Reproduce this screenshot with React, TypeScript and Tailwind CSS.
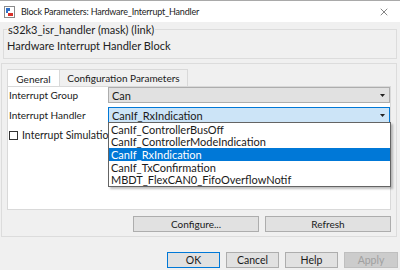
import { X } from "lucide-react";

const handlers = [
  "CanIf_ControllerBusOff",
  "CanIf_ControllerModeIndication",
  "CanIf_RxIndication",
  "CanIf_TxConfirmation",
  "MBDT_FlexCAN0_FifoOverflowNotif",
];

function Arrow() {
  return (
    <svg width="5" height="3" viewBox="0 0 5 3" className="shrink-0">
      <path d="M0 0h5L2.5 3z" fill="#222" />
    </svg>
  );
}

function BlockIcon() {
  return (
    <svg width="11" height="12" viewBox="0 0 11 12">
      <rect x="0.5" y="0.5" width="10" height="11" fill="#fff" stroke="#8a8a8a" />
      <path d="M2 2h4v3H4v2H2z" fill="#2f6fc6" />
      <rect x="4" y="7" width="5" height="3" fill="#d9302a" />
    </svg>
  );
}

export default function App() {
  return (
    <div className="w-[400px] h-[270px] overflow-hidden bg-[#f0f0f0] text-[11px] text-[#1a1a1a] font-['Lato',sans-serif] leading-none">
      {/* title bar */}
      <div className="h-[22px] bg-white border-t border-[#a9a9a9] flex items-center pl-[4px] pr-[10px]">
        <BlockIcon />
        <span className="ml-[6px] text-[9px] tracking-[-0.2px] text-[#222]">
          Block Parameters: Hardware_Interrupt_Handler
        </span>
        <X className="ml-auto h-[12px] w-[12px] text-[#333]" strokeWidth={1.2} />
      </div>

      <div className="px-[3px]">
        <fieldset className="mt-[2px] border border-[#dcdcdc] px-[3px] pb-[5px] h-[35px]">
          <legend className="px-[1px] text-[#222]">s32k3_isr_handler (mask) (link)</legend>
          <div className="mt-[5px] text-[#222]">Hardware Interrupt Handler Block</div>
        </fieldset>
      </div>

      <div className="mt-[4px] mx-[1px] mr-[3px] h-[174px] border border-[#dcdcdc] px-[5px] pt-[4px]">
        {/* tabs */}
        <div className="flex h-[18px] items-end text-[10px]">
          <div className="h-[18px] w-[53px] bg-white border border-b-0 border-[#d9d9d9] flex items-center justify-center relative top-[1px]">
            General
          </div>
          <div className="h-[17px] w-[128px] bg-[#f0f0f0] border border-b-0 border-l-0 border-[#d9d9d9] flex items-center justify-center">
            Configuration Parameters
          </div>
        </div>
        <div className="relative h-[124px] bg-white border border-[#d9d9d9] pl-[1px]">
          <div className="flex items-center h-[16px]">
            <span className="w-[99px] text-[10px]">Interrupt Group</span>
            <div className="flex-1 h-[16px] bg-[#e1e1e1] border border-[#adadad] flex items-center justify-between pl-[3px] pr-[4px]">
              <span>Can</span>
              <Arrow />
            </div>
          </div>
          <div className="flex items-center h-[16px] mt-[4px]">
            <span className="w-[99px] text-[10px]">Interrupt Handler</span>
            <div className="flex-1 h-[16px] bg-[#cce4f7] border border-[#0078d7] flex items-center justify-between pl-[3px] pr-[4px]">
              <span>CanIf_RxIndication</span>
              <Arrow />
            </div>
          </div>
          <div className="flex items-center h-[16px] mt-[4px] text-[10.5px]">
            <span className="w-[9px] h-[9px] border border-[#333] bg-white mr-[4px]" />
            <span>Interrupt Simulation</span>
          </div>

          {/* open list */}
          <div className="absolute left-[100px] top-[35px] w-[283px] bg-white border border-[#646464] shadow-[2px_2px_2px_rgba(0,0,0,0.25)]">
            {handlers.map((h) => (
              <div
                key={h}
                className={
                  h === "CanIf_RxIndication"
                    ? "h-[12.6px] flex items-center pl-[2px] bg-[#0078d7] text-white"
                    : "h-[12.6px] flex items-center pl-[2px]"
                }
              >
                {h}
              </div>
            ))}
          </div>
        </div>

        <div className="flex gap-[6px] justify-end mt-[6px] text-[10px]">
          <button className="w-[126px] h-[16px] bg-[#e1e1e1] border border-[#adadad]">Configure...</button>
          <button className="w-[126px] h-[16px] bg-[#e1e1e1] border border-[#adadad]">Refresh</button>
        </div>
      </div>

      <div className="flex justify-end gap-[6px] pr-[2px] mt-[15px] text-[10.5px]">
        <button className="w-[53px] h-[16px] bg-[#e1e1e1] border border-[#0078d7]">OK</button>
        <button className="w-[53px] h-[16px] bg-[#e1e1e1] border border-[#adadad]">Cancel</button>
        <button className="w-[53px] h-[16px] bg-[#e1e1e1] border border-[#adadad]">Help</button>
        <button className="w-[54px] h-[16px] bg-[#cccccc] border border-[#bfbfbf] text-[#a0a0a0]">Apply</button>
      </div>
    </div>
  );
}
